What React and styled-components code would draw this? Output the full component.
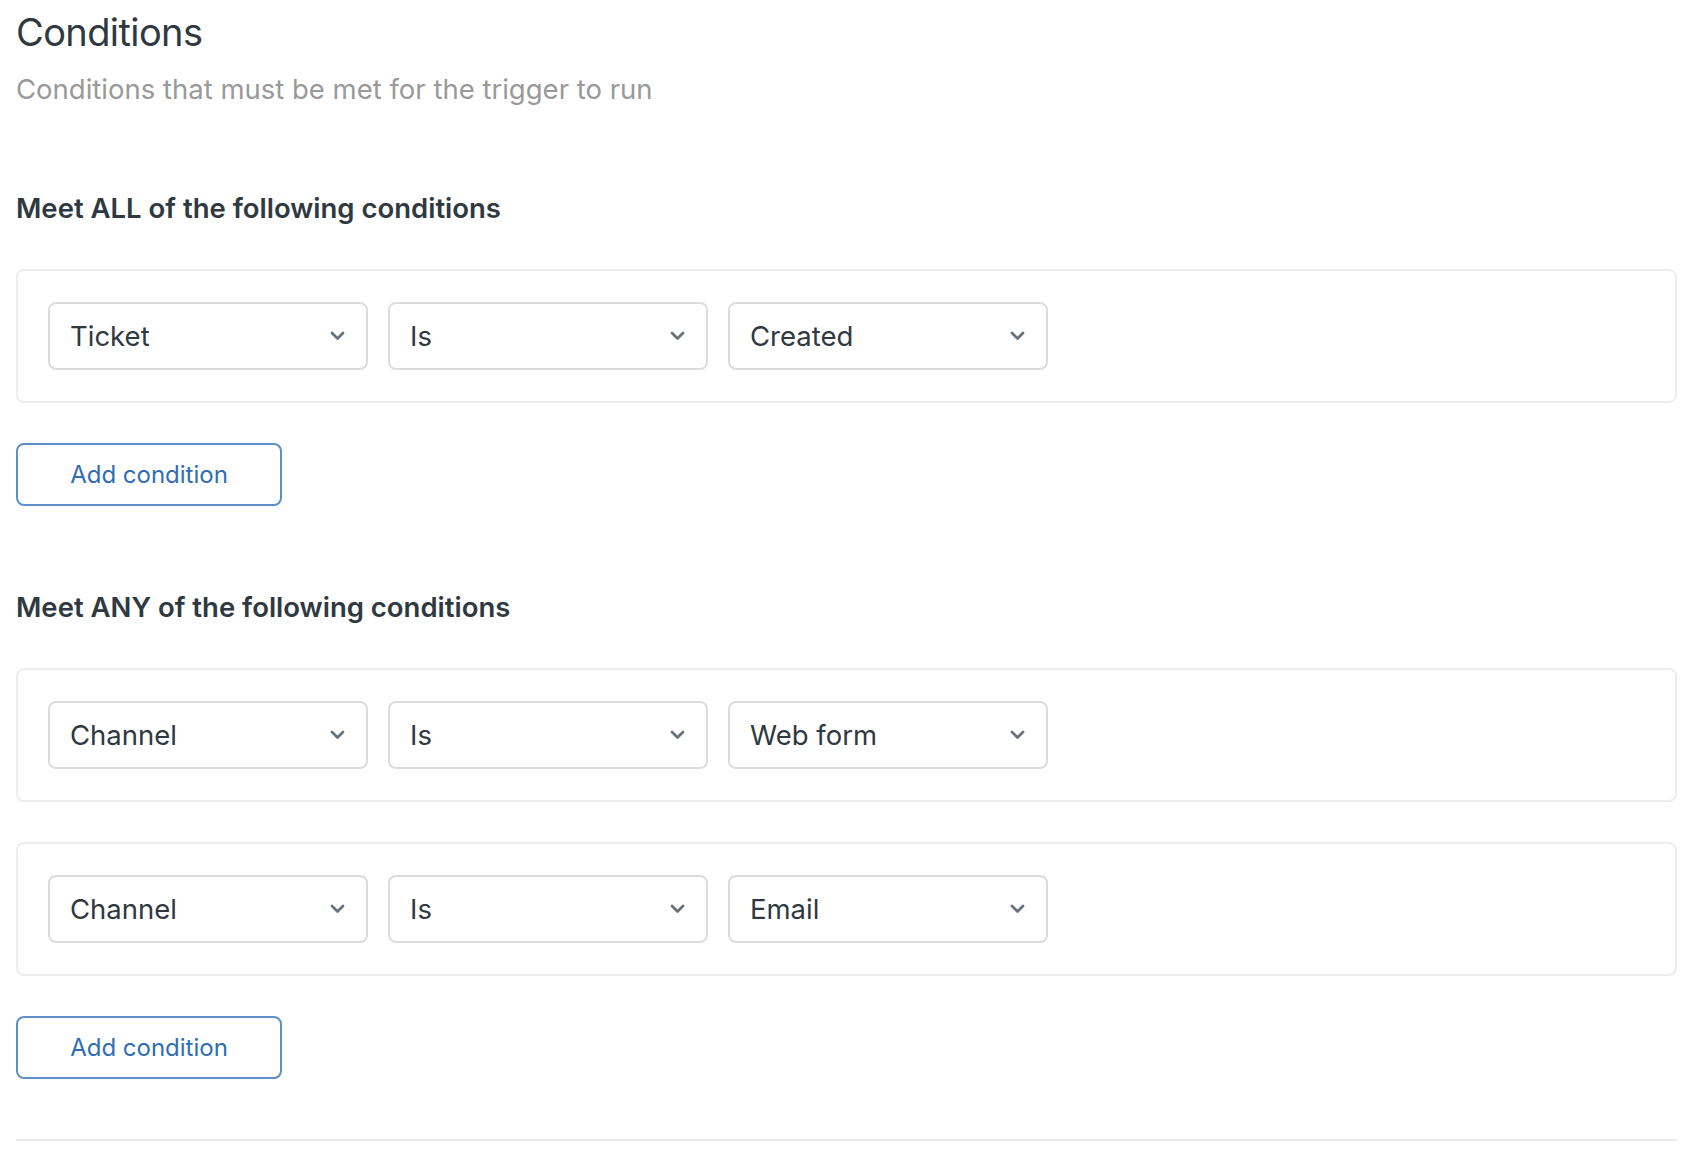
import styled, { createGlobalStyle } from "styled-components";

const GlobalStyle = createGlobalStyle`
  body {
    margin: 0;
    background: #fff;
    font-family: Inter, "Noto Sans", "Liberation Sans", sans-serif;
    color: #2f3941;
  }
`;

const Page = styled.div`
  padding: 8px 21px 0 16px;
`;

const Title = styled.h1`
  margin: 0;
  font-size: 38px;
  line-height: 48px;
  font-weight: 400;
  letter-spacing: -0.6px;
  color: #2f3941;
`;

const Subtitle = styled.p`
  margin: 17px 0 0;
  font-size: 27.5px;
  line-height: 32px;
  color: #999;
`;

const Section = styled.section`
  margin-top: 87px;

  & + & {
    margin-top: 85px;
  }
`;

const SectionTitle = styled.h2`
  margin: 0;
  font-size: 27.5px;
  line-height: 32px;
  font-weight: 600;
  color: #2f3941;
`;

const ConditionList = styled.div`
  display: flex;
  flex-direction: column;
  gap: 40px;
  margin-top: 45px;
`;

const Card = styled.div`
  border: 2px solid #ededed;
  border-radius: 8px;
  padding: 31px 30px;
`;

const Row = styled.div`
  display: flex;
  gap: 20px;
`;

const Select = styled.div`
  box-sizing: border-box;
  width: 320px;
  height: 68px;
  border: 2px solid #dcdcdc;
  border-radius: 8px;
  padding: 0 21px 0 20px;
  display: flex;
  align-items: center;
  justify-content: space-between;
  font-size: 27.5px;
  color: #2f3941;
`;

const AddButton = styled.button`
  box-sizing: border-box;
  margin-top: 40px;
  width: 266px;
  height: 63px;
  border: 2px solid #5e8fc8;
  border-radius: 8px;
  background: #fff;
  color: #2f6db5;
  font-family: inherit;
  font-size: 24px;
  cursor: pointer;
`;

const Divider = styled.hr`
  margin: 60px 0 0;
  border: none;
  height: 2px;
  background: #ececec;
`;

const Chevron = () => (
  <svg width="15" height="10" viewBox="0 0 15 10" fill="none">
    <polyline
      points="2,2 7.5,7.5 13,2"
      stroke="#68737d"
      strokeWidth="2.8"
      strokeLinecap="round"
      strokeLinejoin="round"
    />
  </svg>
);

const Dropdown = ({ value }) => (
  <Select>
    <span>{value}</span>
    <Chevron />
  </Select>
);

const sections = [
  {
    title: "Meet ALL of the following conditions",
    rows: [["Ticket", "Is", "Created"]],
  },
  {
    title: "Meet ANY of the following conditions",
    rows: [
      ["Channel", "Is", "Web form"],
      ["Channel", "Is", "Email"],
    ],
  },
];

const App = () => {
  return (
    <>
      <GlobalStyle />
      <Page>
        <Title>Conditions</Title>
        <Subtitle>Conditions that must be met for the trigger to run</Subtitle>
        {sections.map((s) => (
          <Section key={s.title}>
            <SectionTitle>{s.title}</SectionTitle>
            <ConditionList>
              {s.rows.map((r, i) => (
                <Card key={i}>
                  <Row>
                    {r.map((v, j) => (
                      <Dropdown key={j} value={v} />
                    ))}
                  </Row>
                </Card>
              ))}
            </ConditionList>
            <AddButton>Add condition</AddButton>
          </Section>
        ))}
        <Divider />
      </Page>
    </>
  );
};

export default App;
